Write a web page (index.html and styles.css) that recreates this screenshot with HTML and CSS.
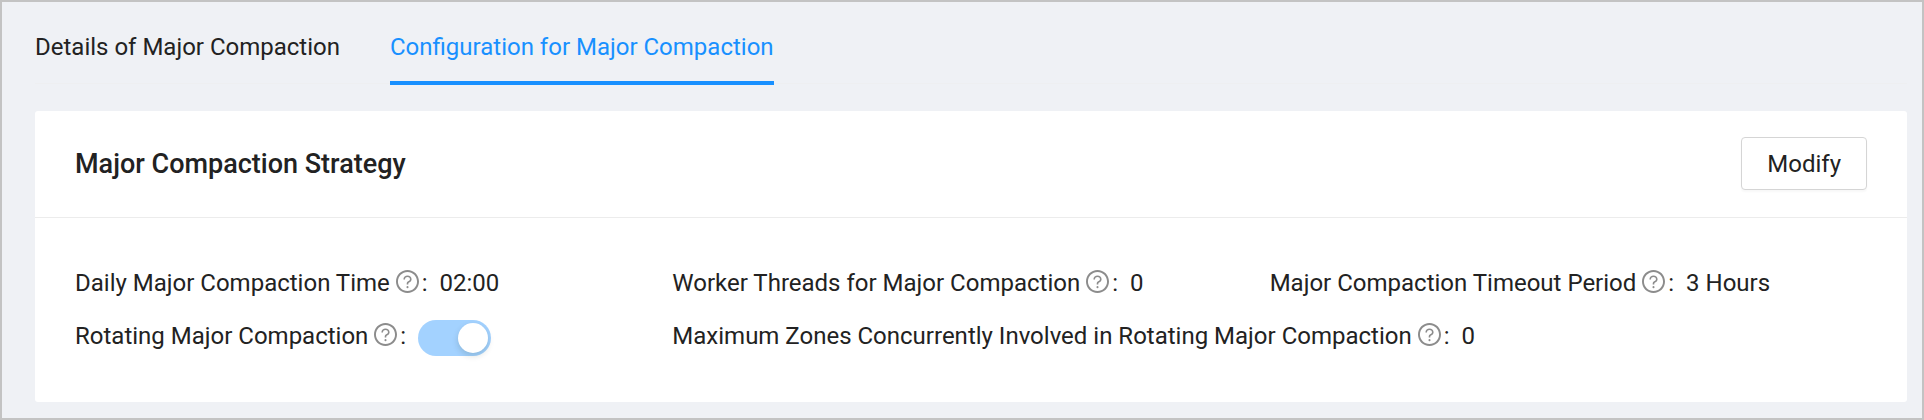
FILE: index.html
```
<!DOCTYPE html>
<html lang="en">
<head>
    <meta charset="UTF-8">
    <meta name="viewport" content="width=device-width, initial-scale=1.0">
    <title>Major Compaction</title>
    <link rel="stylesheet" href="styles.css">
</head>
<body>
    <svg class="sprite" aria-hidden="true">
        <symbol id="question" viewBox="64 64 896 896">
            <path d="M512 64C264.600 64 64 264.600 64 512s200.600 448 448 448 448-200.600 448-448S759.400 64 512 64zm0 820c-205.400 0-372-166.600-372-372s166.600-372 372-372 372 166.600 372 372-166.600 372-372 372z"></path>
            <path d="M623.600 316.700C593.600 290.400 554 276 512 276s-81.600 14.500-111.600 40.700C369.200 344 352 380.700 352 420v7.600c0 4.400 3.600 8 8 8h48c4.400 0 8-3.600 8-8V420c0-44.100 43.100-80 96-80s96 35.900 96 80c0 31.100-22 59.600-56.100 72.700-21.200 8.100-39.200 22.300-52.100 40.900-13.100 19-19.900 41.800-19.900 64.900V620c0 4.400 3.600 8 8 8h48c4.400 0 8-3.600 8-8v-22.700a48.300 48.300 0 0 1 30.900-44.800c59-22.700 97.100-74.700 97.100-132.500.1-39.300-17.100-76-48.300-103.300zM472 732a40 40 0 1 0 80 0 40 40 0 1 0-80 0z"></path>
        </symbol>
    </svg>
    <nav class="tabs">
        <a class="tab" href="#details">Details of Major Compaction</a>
        <a class="tab active" href="#configuration">Configuration for Major Compaction</a>
    </nav>
    <section class="card">
        <header class="card-head">
            <h1>Major Compaction Strategy</h1>
            <button type="button" class="modify">Modify</button>
        </header>
        <div class="items">
            <div class="item">
                <span class="label">Daily Major Compaction Time <svg class="icon"><use href="#question"/></svg>:</span>
                <span>02:00</span>
            </div>
            <div class="item">
                <span class="label">Worker Threads for Major Compaction <svg class="icon"><use href="#question"/></svg>:</span>
                <span>0</span>
            </div>
            <div class="item">
                <span class="label">Major Compaction Timeout Period <svg class="icon"><use href="#question"/></svg>:</span>
                <span>3 Hours</span>
            </div>
            <div class="item">
                <label class="label" for="rotating">Rotating Major Compaction <svg class="icon"><use href="#question"/></svg>:</label>
                <input type="checkbox" id="rotating" class="switch" checked disabled>
            </div>
            <div class="item wide">
                <span class="label">Maximum Zones Concurrently Involved in Rotating Major Compaction <svg class="icon"><use href="#question"/></svg>:</span>
                <span>0</span>
            </div>
        </div>
    </section>
</body>
</html>
```
FILE: styles.css
```
* {
    box-sizing: border-box;
}
body {
    margin: 0;
    min-height: 100vh;
    padding: 0 15px 0 33px;
    border: 2px solid #c3c3c3;
    background-color: #eff1f5;
    color: #222;
    font-family: Roboto, "Liberation Sans", sans-serif;
    font-size: 24px;
    line-height: 36px;
}
.sprite {
    display: none;
}
.tabs {
    display: flex;
    gap: 50px;
    border-bottom: 1px solid #eeeff1;
}
.tab {
    padding: 27px 0 16px;
    margin-bottom: -2px;
    border-bottom: 4px solid transparent;
    color: inherit;
    text-decoration: none;
}
.tab.active {
    color: #1890ff;
    border-color: #1890ff;
}
.card {
    margin-top: 27px;
    background-color: #fff;
    border-radius: 3px;
}
.card-head {
    display: flex;
    justify-content: space-between;
    align-items: center;
    padding: 26px 40px 27px;
    border-bottom: 1px solid #ececec;
}
h1 {
    margin: 0;
    font-size: 27px;
    font-weight: 500;
}
.modify {
    height: 53px;
    padding: 0 25px;
    border: 1px solid #d5d5d5;
    border-radius: 4px;
    background-color: #fff;
    box-shadow: 0 2px 2px rgba(0, 0, 0, .03);
    color: inherit;
    font: inherit;
}
.items {
    display: grid;
    grid-template-columns: repeat(3, 1fr);
    row-gap: 17px;
    padding: 47px 40px 48px;
}
.item {
    display: flex;
    gap: 12px;
    height: 36px;
    white-space: nowrap;
}
.wide {
    grid-column: span 2;
}
.icon {
    width: 23px;
    height: 23px;
    margin-right: 3px;
    vertical-align: -2px;
    fill: #8c8c8c;
}
.switch {
    appearance: none;
    width: 73px;
    height: 36px;
    margin: 2px 0 0;
    padding: 3px;
    border-radius: 18px;
    background-color: #a3d2ff;
}
.switch::before {
    content: "";
    display: block;
    width: 30px;
    height: 30px;
    margin-left: auto;
    border-radius: 50%;
    background-color: #fff;
    box-shadow: 0 3px 6px rgba(0, 35, 11, .15);
}
```
